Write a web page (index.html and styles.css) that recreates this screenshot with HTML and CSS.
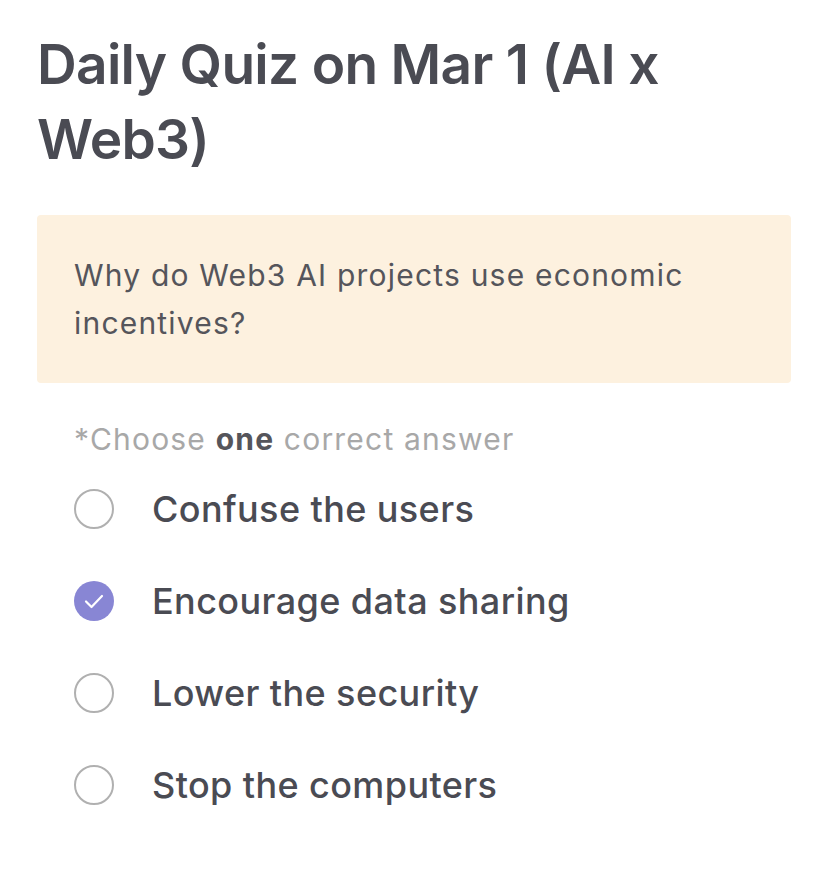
FILE: index.html
```html
<!DOCTYPE html>
<html lang="en">
<head>
<meta charset="utf-8">
<title>Daily Quiz</title>
<link rel="stylesheet" href="styles.css">
</head>
<body>
<main class="page">
  <h1 class="title">Daily Quiz on Mar 1 (AI x Web3)</h1>
  <section class="question">
    <p>Why do Web3 AI projects use economic incentives?</p>
  </section>
  <p class="hint">*Choose <strong>one</strong> correct answer</p>
  <ul class="options">
    <li class="option"><span class="radio"></span><span class="label">Confuse the users</span></li>
    <li class="option selected"><span class="radio"><svg viewBox="0 0 40 40" width="40" height="40"><path d="M12 20.5 L17.5 26 L28 15" fill="none" stroke="#fff" stroke-width="2.2" stroke-linecap="round" stroke-linejoin="round"/></svg></span><span class="label">Encourage data sharing</span></li>
    <li class="option"><span class="radio"></span><span class="label">Lower the security</span></li>
    <li class="option"><span class="radio"></span><span class="label">Stop the computers</span></li>
  </ul>
</main>
</body>
</html>
```
FILE: styles.css
```css
* { box-sizing: border-box; }
html, body { margin: 0; padding: 0; background: #fff; }
body { font-family: Inter, "Noto Sans", sans-serif; color: #4a4b53; }
.page { padding: 27px 37px 0 37px; }
.title {
  margin: 0;
  font-size: 55px;
  font-weight: 600;
  line-height: 75px;
  letter-spacing: -0.7px;
  color: #4a4b53;
}
.question {
  margin-top: 38px;
  background: #fdf1df;
  border-radius: 4px;
  padding: 36px 37px 36px 37px;
}
.question p {
  margin: 0;
  font-size: 30px;
  line-height: 48px;
  color: #55555b;
  font-weight: 400;
  letter-spacing: 1.2px;
}
.hint {
  margin: 36px 0 0 37px;
  font-size: 30px;
  line-height: 40px;
  color: #a8a8a8;
  letter-spacing: 1.2px;
}
.hint strong { color: #55555b; font-weight: 700; }
.options { list-style: none; margin: 4px 0 0 37px; padding: 0; }
.option {
  display: flex;
  align-items: center;
  height: 92px;
  gap: 38px;
}
.radio {
  width: 40px; height: 40px;
  border-radius: 50%;
  border: 2.5px solid #b0b0b0;
  flex: none;
  display: flex;
  align-items: center;
  justify-content: center;
}
.selected .radio { border: none; background: #8886d4; }
.label { font-size: 36px; color: #4a4b53; font-weight: 500; letter-spacing: 0.4px; }
```
